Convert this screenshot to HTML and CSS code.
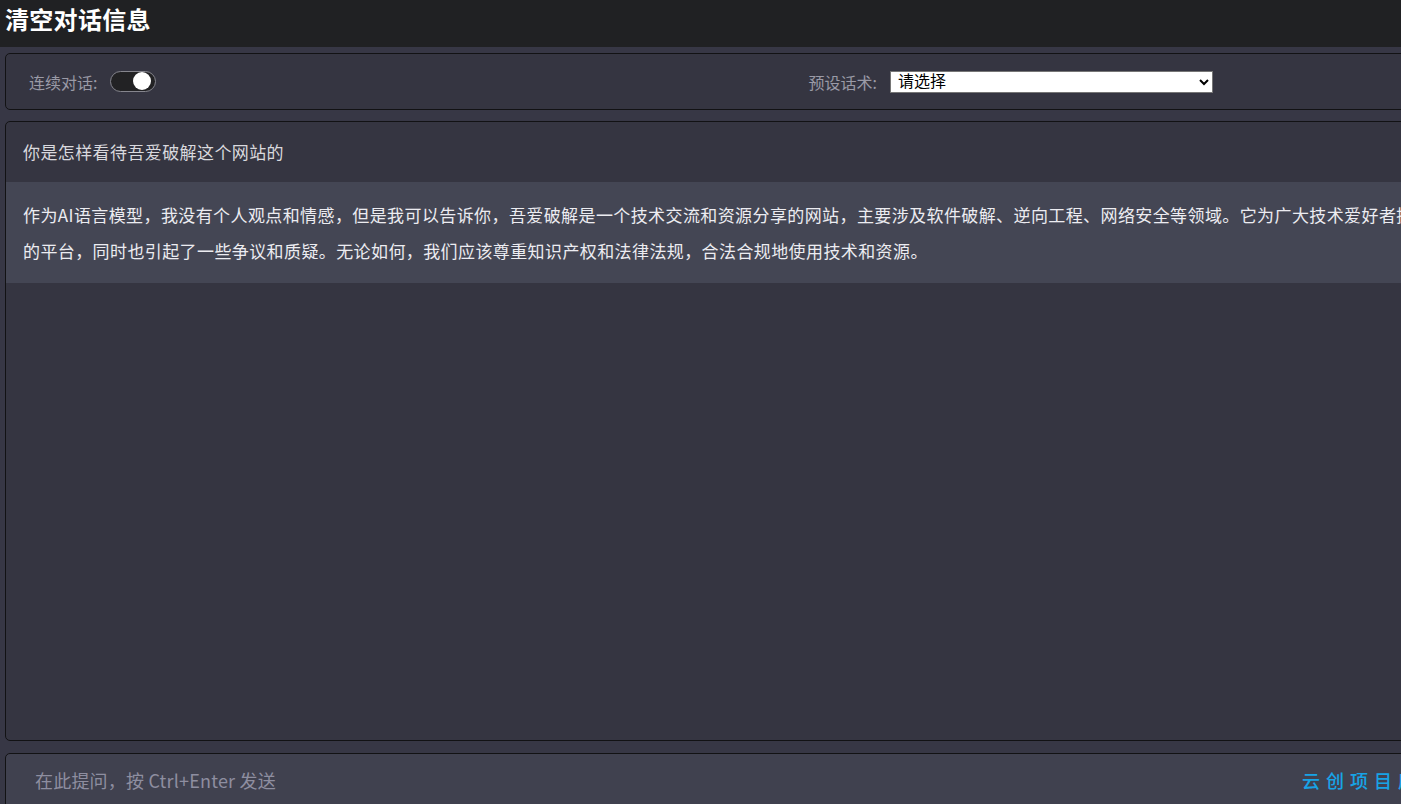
FILE: index.html
```html
<!DOCTYPE html>
<html lang="zh-CN">
<head>
    <meta charset="UTF-8">
    <meta name="viewport" content="width=device-width, initial-scale=1.0">
    <title>AI 对话</title>
    <link rel="stylesheet" href="styles.css">
</head>
<body>
    <header class="topbar">
        <button type="button" class="clear-btn" id="clear-btn">清空对话信息</button>
    </header>

    <div class="page">
        <div class="panel settings">
            <div class="setting">
                <span class="setting-label">连续对话:</span>
                <label class="switch">
                    <input type="checkbox" id="continuous" checked>
                    <span class="slider"></span>
                </label>
            </div>
            <div class="setting">
                <span class="setting-label">预设话术:</span>
                <select class="preset" id="preset">
                    <option>请选择</option>
                    <option>翻译助手</option>
                    <option>代码解释</option>
                </select>
            </div>
        </div>

        <div class="panel chat" id="chat">
            <div class="msg question">你是怎样看待吾爱破解这个网站的</div>
            <div class="msg answer">作为AI语言模型，我没有个人观点和情感，但是我可以告诉你，吾爱破解是一个技术交流和资源分享的网站，主要涉及软件破解、逆向工程、网络安全等领域。它为广大技术爱好者提供了一个学习和交流的平台，同时也引起了一些争议和质疑。无论如何，我们应该尊重知识产权和法律法规，合法合规地使用技术和资源。</div>
        </div>

        <div class="panel composer">
            <textarea class="ask" id="ask" placeholder="在此提问，按 Ctrl+Enter 发送"></textarea>
            <a class="brand" href="#">云创项目库</a>
            <button type="button" class="send-btn">发送</button>
        </div>
    </div>

    <script>
    const chat = document.getElementById('chat');
    const ask = document.getElementById('ask');

    document.getElementById('clear-btn').addEventListener('click', function () {
        chat.innerHTML = '';
    });

    ask.addEventListener('keydown', function (e) {
        if (e.ctrlKey && e.key === 'Enter' && ask.value.trim() !== '') {
            const q = document.createElement('div');
            q.className = 'msg question';
            q.textContent = ask.value;
            chat.appendChild(q);
            ask.value = '';
        }
    });
    </script>
</body>
</html>
```

FILE: styles.css
```css
html, body {
    margin: 0;
    overflow: hidden;
    background-color: #373745;
    font-family: "Noto Sans CJK SC", "Noto Sans", sans-serif;
}

.topbar {
    height: 47px;
    background-color: #202123;
    padding-left: 5px;
    box-sizing: border-box;
}

.clear-btn {
    padding: 0;
    border: none;
    background: none;
    color: #fff;
    font-family: inherit;
    font-size: 24px;
    font-weight: bold;
    letter-spacing: 0.3px;
    line-height: 38px;
    cursor: pointer;
}

.page {
    padding: 6px 0 0 5px;
    width: 1584px;
}

.panel {
    border: 1px solid #121214;
    border-radius: 5px;
    background-color: #353541;
    box-sizing: border-box;
    margin-bottom: 11px;
}

.settings {
    display: flex;
    align-items: center;
    height: 57px;
    padding: 0 0 0 23px;
}

.setting {
    flex: 1;
    display: flex;
    align-items: center;
}

.setting-label {
    color: #9a9aa6;
    font-size: 16px;
    margin-right: 13px;
}

.switch {
    position: relative;
    display: inline-block;
    width: 46px;
    height: 21px;
}

.switch input {
    display: none;
}

.slider {
    position: absolute;
    inset: 0;
    background-color: #222224;
    border: 1.5px solid #85858d;
    border-radius: 11px;
    box-sizing: border-box;
    cursor: pointer;
}

.slider::before {
    content: "";
    position: absolute;
    top: 0;
    left: 2px;
    width: 18px;
    height: 18px;
    border-radius: 50%;
    background-color: #fff;
}

.switch input:checked + .slider::before {
    left: 22px;
}

.preset {
    width: 323px;
    height: 22px;
    padding: 0 3px;
    border: 1px solid #767676;
    border-radius: 0;
    background-color: #fff;
    color: #000;
    font-family: "Liberation Sans", "Noto Sans CJK SC", sans-serif;
    font-size: 16px;
}

.chat {
    height: 620px;
    margin-bottom: 12px;
    overflow: hidden;
}

.msg {
    font-size: 17px;
    letter-spacing: 0.4px;
    padding: 15px 17px;
}

.question {
    color: #d9d9de;
    line-height: 30px;
}

.answer {
    color: #ececf1;
    background-color: #444654;
    line-height: 35.5px;
}

.composer {
    display: flex;
    align-items: flex-start;
    height: 120px;
    padding: 14px 0 0 29px;
    background-color: #40414f;
}

.ask {
    flex: 1;
    height: 90px;
    padding: 0;
    border: none;
    outline: none;
    resize: none;
    background: transparent;
    color: #ececf1;
    font-family: inherit;
    font-size: 18px;
    letter-spacing: 0.2px;
    line-height: 24px;
}

.ask::placeholder {
    color: #8e8ea0;
}

.brand {
    color: #17a3e6;
    font-size: 18px;
    font-weight: 500;
    letter-spacing: 6px;
    line-height: 24px;
    text-decoration: none;
    margin-right: 18px;
}

.send-btn {
    width: 148px;
    height: 32px;
    border: none;
    border-radius: 4px;
    background-color: #10a37f;
    color: #fff;
    font-family: inherit;
    cursor: pointer;
}
```
